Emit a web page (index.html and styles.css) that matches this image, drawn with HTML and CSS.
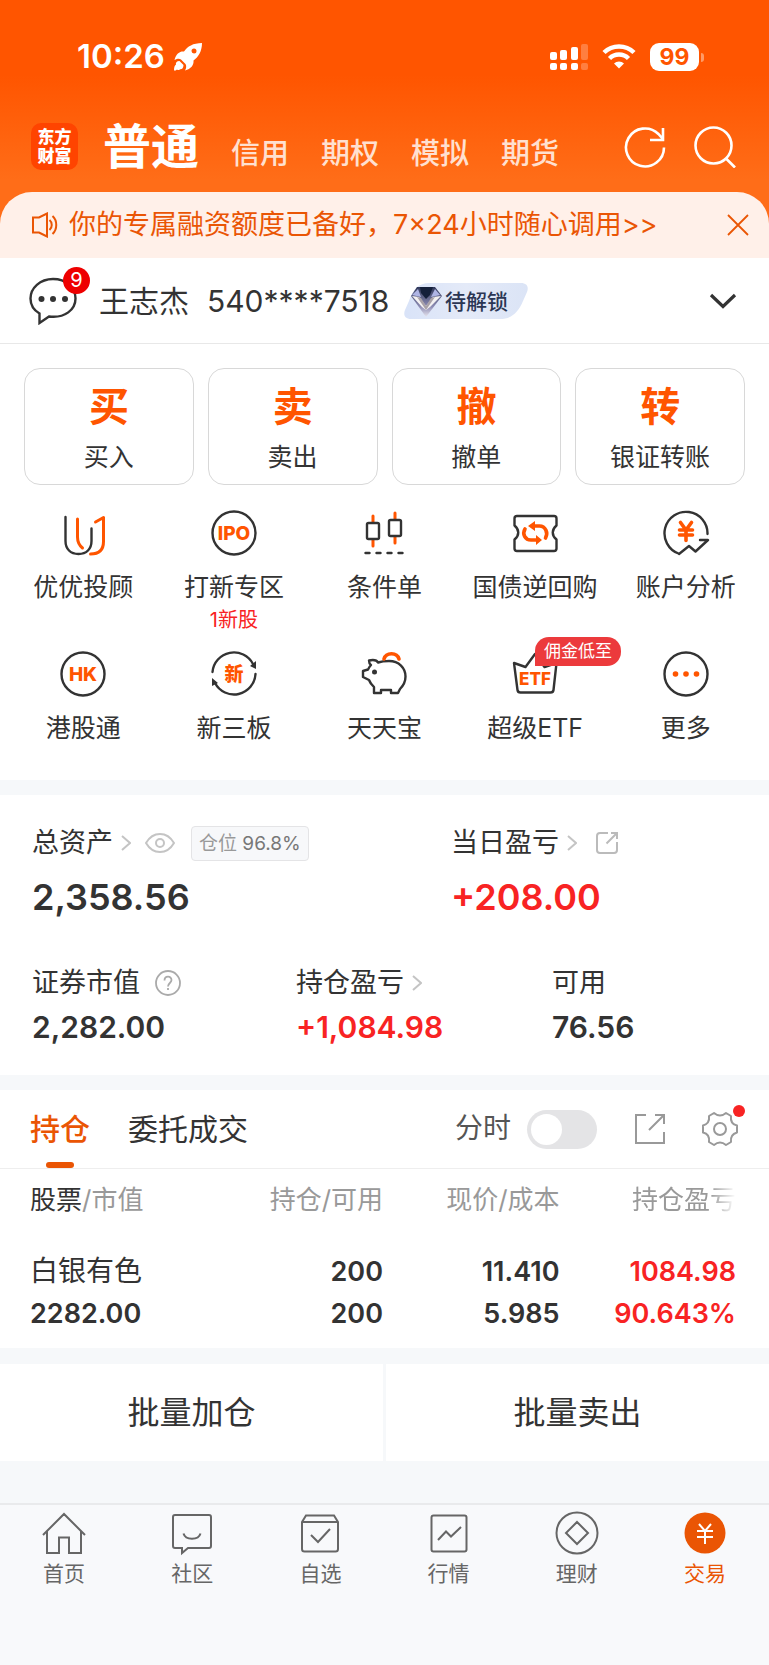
FILE: index.html
```html
<!DOCTYPE html>
<html lang="zh-CN">
<head>
  <meta charset="UTF-8">
  <meta name="viewport" content="width=device-width, initial-scale=1.0">
  <title>交易</title>
  <link rel="stylesheet" href="styles.css">
</head>
<body>
  <header class="top">
    <div class="status-bar">
      <span class="time">10:26</span>
      <svg class="rocket" width="30" height="30" viewBox="0 0 30 30" fill="#fff">
        <path fill-rule="evenodd" d="M29 1C20 1 14.500 4.500 11 9.500 7 9 3 11.500 1.500 18c3-1.500 5-1.500 6.500-.5l4.500 4.500c1 1.500 1 4-.5 6.500 6-1.500 9-5.500 8.500-10C25.500 15 29 9 29 1zM21 6.500a2.500 2.500 0 1 1 0 5 2.500 2.500 0 0 1 0-5z"/>
        <path d="M6.500 19c-3 0-4 2-3.500 3.500-1.500 1-2 3-2 6 1.500 0 2 0 3-1 1 .8 2 .8 3-.3 2 .3 3.500-1.200 3.500-4.200z"/>
      </svg>
      <div class="status-icons">
        <svg width="38" height="28" viewBox="0 0 38 28" fill="#fff">
          <rect x="0" y="9" width="7" height="8" rx="2"/><rect x="10" y="7" width="7" height="10" rx="2"/><rect x="21" y="4" width="7" height="13" rx="2"/><rect x="31" y="1" width="7" height="16" rx="2" opacity=".25"/>
          <rect x="0" y="20" width="7" height="7" rx="2"/><rect x="10" y="20" width="7" height="7" rx="2"/><rect x="21" y="20" width="7" height="7" rx="2"/><rect x="31" y="20" width="7" height="7" rx="2" opacity=".25"/>
        </svg>
        <svg width="34" height="26" viewBox="0 0 34 26" fill="none" stroke="#fff" stroke-width="4.500">
          <path d="M2 8.500a21.500 21.500 0 0 1 30 0M7.500 14.500a13.500 13.500 0 0 1 19 0"/>
          <path d="M12 19.500a7 7 0 0 1 10 0l-5 5z" fill="#fff" stroke="none"/>
        </svg>
        <div class="battery"><span class="battery-level">99</span><i class="battery-tip"></i></div>
      </div>
    </div>

    <div class="nav-bar">
      <div class="logo"><span>东方</span><span>财富</span></div>
      <nav class="account-tabs">
        <a href="#" class="active">普通</a>
        <a href="#">信用</a>
        <a href="#">期权</a>
        <a href="#">模拟</a>
        <a href="#">期货</a>
      </nav>
      <button class="icon-btn" aria-label="刷新">
        <svg width="42" height="42" viewBox="0 0 42 42" fill="none" stroke="#fff" stroke-width="2.600">
          <path d="M40 21.500a19 19 0 1 1-5.600-13.500l4 4.500M39 2v12H26"/>
        </svg>
      </button>
      <button class="icon-btn" aria-label="搜索">
        <svg width="42" height="42" viewBox="0 0 42 42" fill="none" stroke="#fff" stroke-width="2.600">
          <circle cx="19.500" cy="19.500" r="18"/><path d="M31.500 32L41 41.500"/>
        </svg>
      </button>
    </div>

    <div class="notice">
      <svg width="26" height="26" viewBox="0 0 26 26" fill="none" stroke="#ea5504" stroke-width="2">
        <path d="M1 5.500h6l8-4v23l-8-4H1zM17.500 8c3 2.500 3 7.500 0 10M20.500 4c5 4.500 5 13.500 0 18"/>
      </svg>
      <a href="#">你的专属融资额度已备好，7×24小时随心调用&gt;&gt;</a>
      <button class="icon-btn" aria-label="关闭">
        <svg width="22" height="22" viewBox="0 0 22 22" fill="none" stroke="#ea5504" stroke-width="1.800"><path d="M1 1l20 20M21 1L1 21"/></svg>
      </button>
    </div>
  </header>

  <main>
    <section class="user-row">
      <button class="icon-btn message" aria-label="消息">
        <svg width="48" height="48" viewBox="0 0 48 48" fill="none" stroke="#333" stroke-width="2.400">
          <path d="M24 2C11 2 1.500 11 1.500 21.500c0 6 3 11.500 9 15V46l9.500-6.500c16 2 26.500-7 26.500-18C46.500 10.500 37 2 24 2z"/>
          <g fill="#333" stroke="none"><circle cx="12.500" cy="22" r="3"/><circle cx="24" cy="22" r="3"/><circle cx="36" cy="22" r="3"/></g>
        </svg>
        <span class="count">9</span>
      </button>
      <span class="user-name">王志杰</span>
      <span class="user-account">540****7518</span>
      <svg class="level" width="126" height="36" viewBox="0 0 126 36">
        <defs>
          <linearGradient id="levelBg" x1="0" x2="1"><stop offset="0" stop-color="#d9e3f8"/><stop offset=".5" stop-color="#e4eaf8"/><stop offset="1" stop-color="#dbe4f6"/></linearGradient>
          <linearGradient id="gem" x1="0" x2="0" y1="0" y2="1"><stop offset="0" stop-color="#30385a"/><stop offset=".65" stop-color="#8d8cb4"/><stop offset="1" stop-color="#e8e6ee"/></linearGradient>
        </defs>
        <path fill="url(#levelBg)" d="M26 0h92c6 0 8 4 6 9l-4 9c-5 12-12 18-23 18H8c-6 0-8-4-6-9l4-9C10 6 16 0 26 0z"/>
        <path fill="url(#gem)" d="M14 4h18l7 9-16 21L8 13z"/>
        <path fill="#141f3a" d="M17 4h13l-3 8-4 4-5-6z"/>
        <path fill="#aeb4e4" d="M9 12l6-6 3 8zM37 12l-5-6-4 8z"/>
        <path fill="#f3f1f2" d="M9 13l7 1 7 9 7-9 8-1-11 11-4 3-4-3z"/>
        <path fill="#a9a2a8" d="M14 14l4 1 5 8 5-8 4-1-9 13z"/>
        <text x="42" y="26" class="level-text">待解锁</text>
      </svg>
      <button class="icon-btn expand" aria-label="展开">
        <svg width="28" height="18" viewBox="0 0 28 18" fill="none" stroke="#333" stroke-width="3.200"><path d="M2 3l12 11.500L26 3"/></svg>
      </button>
    </section>

    <section class="panel">
      <div class="trade-cards">
        <button class="trade-card"><b>买</b><span>买入</span></button>
        <button class="trade-card"><b>卖</b><span>卖出</span></button>
        <button class="trade-card"><b>撤</b><span>撤单</span></button>
        <button class="trade-card"><b>转</b><span>银证转账</span></button>
      </div>

      <div class="shortcuts">
        <a href="#" class="shortcut">
          <span class="shortcut-icon"><svg class="line-icon" viewBox="0 0 48 48">
            <path d="M6.500 8v24c0 8 5 13 13 13s13-5 13-13V19.500"/>
            <path class="accent" d="M18.500 10v18c0 6 2 8.500 5 11M36.500 13l8-4.500v24c0 8-4 12.500-13 12.500"/>
          </svg></span>
          <span>优优投顾</span>
        </a>
        <a href="#" class="shortcut">
          <span class="shortcut-icon"><svg class="line-icon" viewBox="0 0 48 48">
            <circle cx="24" cy="24" r="21.500"/><text x="24" y="31">IPO</text>
          </svg></span>
          <span>打新专区</span>
          <small>1新股</small>
        </a>
        <a href="#" class="shortcut">
          <span class="shortcut-icon"><svg class="line-icon" viewBox="0 0 48 48">
            <path class="accent" d="M13 7v6M13 31v6M35 4v6M35 28v6"/>
            <rect x="7" y="14" width="12" height="16" rx="1.500"/><rect x="29" y="11" width="12" height="16" rx="1.500"/>
            <path d="M5.500 44h4M16.500 44h4M27.500 44h4M38.500 44h4"/>
          </svg></span>
          <span>条件单</span>
        </a>
        <a href="#" class="shortcut">
          <span class="shortcut-icon"><svg class="line-icon" viewBox="0 0 48 48">
            <path d="M6 7h37q2.500 0 2.500 2.500v7c-5 4-5 10 0 14v9q0 2.500-2.500 2.500H6q-2.500 0-2.500-2.500v-9c5-4 5-10 0-14v-7Q3.500 7 6 7z"/>
            <path class="accent thick" d="M14 20c-3 5 0 11 6 11h6M34.500 29c3-5 0-12-6-12h-6"/>
            <path class="accent-fill" d="M25 26l6 5-6 5zM24 12l-7 5 7 5z"/>
          </svg></span>
          <span>国债逆回购</span>
        </a>
        <a href="#" class="shortcut">
          <span class="shortcut-icon"><svg class="line-icon" viewBox="0 0 48 48">
            <path d="M45.500 25A21.500 21.500 0 1 0 16.500 44.500l.5.500 10-8 6.500 5.500L46 31h-8"/>
            <path class="accent thick" d="M18.500 13.500l5.500 7.500 5.500-7.500M24 21v10.500M17.500 21h13M17.500 26h13"/>
          </svg></span>
          <span>账户分析</span>
        </a>
        <a href="#" class="shortcut">
          <span class="shortcut-icon"><svg class="line-icon" viewBox="0 0 48 48">
            <circle cx="24" cy="24" r="21.500"/><text x="24" y="31">HK</text>
          </svg></span>
          <span>港股通</span>
        </a>
        <a href="#" class="shortcut">
          <span class="shortcut-icon"><svg class="line-icon" viewBox="0 0 48 48">
            <path d="M2.500 22A21.500 21.500 0 0 1 43 14M45.500 24A21.500 21.500 0 0 1 5 33"/>
            <path class="dark-fill" d="M46 11v8l-6-3zM2 36v-8l6 5z"/>
            <text x="24" y="31">新</text>
          </svg></span>
          <span>新三板</span>
        </a>
        <a href="#" class="shortcut">
          <span class="shortcut-icon"><svg class="line-icon" viewBox="0 0 48 48">
            <path d="M9 10.500c5-1 8 0 9 2 3-1 7-1.500 11-1.500 10 0 16.500 7 16.500 15.500 0 6-3 10-5.500 12.500l-2 4h-7v-3H21v3h-7v-6c-2-2-4-4-5-7l-6-3v-6l5-1.500c1-2 2-3.500 3-4.500-1.500-1-2-2.500-2-4.500z"/>
            <path class="accent thick" d="M24 9c2-7 13-7 15 0"/>
            <circle class="dark-fill" cx="14.500" cy="22" r="2.500"/>
          </svg></span>
          <span>天天宝</span>
        </a>
        <a href="#" class="shortcut">
          <span class="shortcut-icon"><svg class="line-icon" viewBox="0 0 48 48">
            <path d="M3 13l11.500 4L24 4l9.500 13L45.500 13l-3 27q-.3 2.500-3 2.500h-30q-2.700 0-3-2.500z"/>
            <text class="small" x="24" y="35">ETF</text>
          </svg><em class="promo">佣金低至</em></span>
          <span>超级ETF</span>
        </a>
        <a href="#" class="shortcut">
          <span class="shortcut-icon"><svg class="line-icon" viewBox="0 0 48 48">
            <circle cx="24" cy="24" r="21.500"/>
            <g class="accent-fill"><circle cx="13.500" cy="24" r="2.800"/><circle cx="24" cy="24" r="2.800"/><circle cx="34.500" cy="24" r="2.800"/></g>
          </svg></span>
          <span>更多</span>
        </a>
      </div>
    </section>

    <section class="assets">
      <div class="assets-main">
        <div>
          <div class="asset-label">
            <a href="#">总资产</a>
            <svg class="arrow" width="10" height="16" viewBox="0 0 10 16"><path d="M1 1l8 7-8 7"/></svg>
            <button class="icon-btn eye" aria-label="隐藏金额">
              <svg width="30" height="20" viewBox="0 0 30 20" fill="none" stroke="#c4c4c4" stroke-width="2"><path d="M1 10c7-12 21-12 28 0-7 12-21 12-28 0z"/><circle cx="15" cy="10" r="4"/></svg>
            </button>
            <span class="position">仓位 <b>96.8%</b></span>
          </div>
          <div class="asset-value">2,358.56</div>
        </div>
        <div>
          <div class="asset-label">
            <a href="#">当日盈亏</a>
            <svg class="arrow" width="10" height="16" viewBox="0 0 10 16"><path d="M1 1l8 7-8 7"/></svg>
            <button class="icon-btn share" aria-label="分享">
              <svg width="24" height="24" viewBox="0 0 24 24" fill="none" stroke="#bbb" stroke-width="2"><path d="M13 2H5Q2 2 2 5v14q0 3 3 3h14q3 0 3-3v-8M11.500 12.500L22 2M16 2h6v6"/></svg>
            </button>
          </div>
          <div class="asset-value red">+208.00</div>
        </div>
      </div>
      <div class="assets-sub">
        <div>
          <div class="asset-label">
            <span>证券市值</span>
            <button class="icon-btn help" aria-label="说明">
              <svg width="26" height="26" viewBox="0 0 26 26" fill="none" stroke="#aaa" stroke-width="1.800"><circle cx="13" cy="13" r="12"/><path d="M9.500 10.500c0-5 7-5 7-.5 0 3-3.500 3-3.500 6.500M13 18v2"/></svg>
            </button>
          </div>
          <div class="asset-value">2,282.00</div>
        </div>
        <div>
          <div class="asset-label">
            <a href="#">持仓盈亏</a>
            <svg class="arrow" width="10" height="16" viewBox="0 0 10 16"><path d="M1 1l8 7-8 7"/></svg>
          </div>
          <div class="asset-value red">+1,084.98</div>
        </div>
        <div>
          <div class="asset-label"><span>可用</span></div>
          <div class="asset-value">76.56</div>
        </div>
      </div>
    </section>

    <section class="holdings">
      <div class="holding-bar">
        <button class="tab active">持仓</button>
        <button class="tab">委托成交</button>
        <label class="chart-switch">分时 <input type="checkbox" role="switch"></label>
        <button class="icon-btn" aria-label="导出">
          <svg width="32" height="32" viewBox="0 0 32 32" fill="none" stroke="#999" stroke-width="2"><path d="M12 2H2v28h28V19M15 17L30 2M21 2h9v9"/></svg>
        </button>
        <button class="icon-btn settings" aria-label="设置">
          <svg width="36" height="36" viewBox="0 0 36 36" fill="none" stroke="#999" stroke-width="2" stroke-linejoin="round">
            <path d="M12 2q6 5 12 0l5 3q-1 8 6 9.500v7q-7 2-6 9.500l-5 3q-6-5-12 0l-5-3q1-8-6-9.500v-7q7-2 6-9.500z"/><circle cx="18" cy="18" r="6"/>
          </svg>
          <span class="dot"></span>
        </button>
      </div>
      <table class="stock-table">
        <thead>
          <tr><th><b>股票</b>/市值</th><th>持仓/可用</th><th>现价/成本</th><th><span class="fade">持仓盈亏</span></th></tr>
        </thead>
        <tbody>
          <tr><td><span class="stock-name">白银有色</span><br>2282.00</td><td>200<br>200</td><td>11.410<br>5.985</td><td class="red">1084.98<br>90.643%</td></tr>
        </tbody>
      </table>
    </section>

    <div class="batch">
      <button>批量加仓</button>
      <button>批量卖出</button>
    </div>
  </main>

  <nav class="tab-bar">
    <a href="#">
      <svg viewBox="0 0 48 48"><path d="M3 26L24 5l21 21M7 22v22h12V28.500h10V44h12V22"/></svg>
      <span>首页</span>
    </a>
    <a href="#">
      <svg viewBox="0 0 48 48"><path d="M7 6h34q2 0 2 2v29q0 2-2 2H20l-6 5v-5H7q-2 0-2-2V8q0-2 2-2z"/><path d="M15.500 24.500c2 7 15 7 17 0"/></svg>
      <span>社区</span>
    </a>
    <a href="#">
      <svg viewBox="0 0 48 48"><path d="M6 13v27q0 2.500 2.500 2.500h31q2.500 0 2.500-2.500V13l-4-6.500H10zM6 13h36M15 26l7 7 12-13"/></svg>
      <span>自选</span>
    </a>
    <a href="#">
      <svg viewBox="0 0 48 48"><rect x="6.500" y="6.500" width="35" height="36" rx="2"/><path d="M13 31l8-8.500 5 5L36 18"/></svg>
      <span>行情</span>
    </a>
    <a href="#">
      <svg viewBox="0 0 48 48"><circle cx="24" cy="24" r="20.500"/><path d="M24 13l11 11-11 11-11-11z"/></svg>
      <span>理财</span>
    </a>
    <a href="#" class="active">
      <svg viewBox="0 0 48 48"><circle class="coin" cx="24" cy="24" r="20.500"/><path class="yen" d="M18 15l6 7 6-7M24 22v13M16 22h16M16 28h16"/></svg>
      <span>交易</span>
    </a>
  </nav>
</body>
</html>
```
FILE: styles.css
```css
* {
  margin: 0;
  padding: 0;
  box-sizing: border-box;
}
body {
  min-height: 100vh;
  display: flex;
  flex-direction: column;
  font-family: Inter, "Noto Sans CJK SC", sans-serif;
  line-height: 1.2;
  background-color: #f6f8fa;
  color: #333;
}
a {
  color: inherit;
  text-decoration: none;
}
button {
  font: inherit;
  color: inherit;
  background: none;
  border: none;
  cursor: pointer;
}
svg {
  display: block;
  flex: none;
}
.icon-btn {
  display: flex;
  flex: none;
}
.red {
  color: #f82323;
}

/* header */
.top {
  background: linear-gradient(#ff5500 75px, #ff6d18 180px);
}
.status-bar {
  display: flex;
  align-items: center;
  height: 114px;
  padding: 0 65px 0 77px;
  color: #fff;
}
.time {
  font-size: 33px;
  font-weight: 600;
}
.rocket {
  margin-left: 8px;
}
.status-icons {
  display: flex;
  align-items: center;
  gap: 14px;
  margin-left: auto;
}
.battery {
  display: flex;
  align-items: center;
  gap: 2px;
}
.battery-level {
  width: 49px;
  border-radius: 9px;
  background-color: #fff;
  color: #ff5500;
  font-size: 23px;
  font-weight: 700;
  line-height: 28px;
  text-align: center;
}
.battery-tip {
  width: 3px;
  height: 9px;
  border-radius: 0 3px 3px 0;
  background-color: #ff9a66;
}
.nav-bar {
  display: flex;
  align-items: center;
  gap: 28px;
  height: 78px;
  padding: 0 33px 13px 31px;
}
.logo {
  display: flex;
  flex-direction: column;
  align-items: center;
  justify-content: center;
  width: 47px;
  height: 47px;
  border-radius: 10px;
  background-color: #ff4400;
  color: #fff;
  font-size: 17px;
  font-weight: 900;
  line-height: 19px;
}
.account-tabs {
  flex: 1;
  display: flex;
  align-items: baseline;
  gap: 32px;
  margin-left: -3px;
  padding-top: 8px;
  color: #ffe0d0;
  font-size: 29px;
  font-weight: 500;
  line-height: 60px;
}
.account-tabs .active {
  color: #fff;
  font-size: 48px;
  font-weight: 700;
}
.notice {
  display: flex;
  align-items: center;
  gap: 11px;
  height: 66px;
  padding: 0 20px 0 32px;
  border-radius: 32px 32px 0 0;
  background-color: #fff0e9;
  color: #ea5504;
  font-size: 27px;
}
.notice a {
  flex: 1;
}

/* account */
.user-row {
  display: flex;
  align-items: center;
  height: 86px;
  padding: 0 32px 0 29px;
  border-bottom: 1px solid #e8e8e8;
  background-color: #fff;
}
.message {
  position: relative;
}
.count {
  position: absolute;
  top: -10px;
  left: 34px;
  width: 27px;
  border-radius: 50%;
  background-color: #ee0000;
  color: #fff;
  font-size: 20px;
  line-height: 27px;
  text-align: center;
}
.user-name {
  margin: 0 18px 0 22px;
  font-size: 30px;
}
.user-account {
  font-size: 30px;
}
.level {
  margin-left: 14px;
}
.level-text {
  fill: #2b3654;
  font-size: 21px;
  font-weight: 500;
}
.expand {
  margin-left: auto;
}

.panel {
  padding: 24px 0 34px;
  background-color: #fff;
}
.trade-cards {
  display: grid;
  grid-template-columns: repeat(4, 1fr);
  gap: 14px;
  padding: 0 24px;
}
.trade-card {
  display: flex;
  flex-direction: column;
  align-items: center;
  gap: 10px;
  padding: 14px 0 11px;
  border: 1px solid #d8d8d8;
  border-radius: 16px;
}
.trade-card b {
  color: #ff5500;
  font-size: 40px;
  font-weight: 700;
  line-height: 48px;
}
.trade-card span {
  font-size: 25px;
  line-height: 32px;
}
.shortcuts {
  display: grid;
  grid-template-columns: repeat(5, 1fr);
  row-gap: 15px;
  padding: 24px 8px 0;
}
.shortcut {
  display: flex;
  flex-direction: column;
  align-items: center;
  font-size: 25px;
  line-height: 36px;
  white-space: nowrap;
}
.shortcut small {
  color: #f82323;
  font-size: 20px;
  line-height: 30px;
}
.shortcut-icon {
  position: relative;
  margin-bottom: 12px;
}
.line-icon {
  width: 48px;
  height: 48px;
  fill: none;
  stroke: #333;
  stroke-width: 2.4;
  stroke-linecap: round;
  stroke-linejoin: round;
}
.line-icon text {
  fill: #ff5500;
  stroke: none;
  font-size: 19px;
  font-weight: 800;
  text-anchor: middle;
}
.line-icon .small {
  font-size: 17px;
}
.line-icon .accent {
  stroke: #ff5500;
  stroke-width: 3;
}
.line-icon .thick {
  stroke-width: 3.6;
}
.accent-fill {
  fill: #ff5500;
  stroke: none;
}
.dark-fill {
  fill: #333;
  stroke: none;
}
.promo {
  position: absolute;
  top: -13px;
  left: 24px;
  padding: 0 9px;
  border-radius: 14px 14px 14px 0;
  background-color: #ec3a3c;
  color: #fff;
  font-size: 17px;
  font-style: normal;
  line-height: 29px;
}

/* assets */
.assets {
  margin-top: 15px;
  padding: 30px 32px 28px;
  background-color: #fff;
}
.assets-main {
  display: grid;
  grid-template-columns: 419fr 286fr;
  margin-bottom: 44px;
}
.assets-sub {
  display: grid;
  grid-template-columns: 264fr 256fr 185fr;
}
.asset-label {
  display: flex;
  align-items: center;
  height: 36px;
  font-size: 27px;
}
.arrow {
  margin-left: 8px;
  fill: none;
  stroke: #c4c4c4;
  stroke-width: 2;
}
.eye {
  margin-left: 14px;
}
.share {
  margin-left: 18px;
}
.help {
  margin-left: 15px;
}
.position {
  margin-left: 16px;
  padding: 0 7px;
  border: 1px solid #e4e4e6;
  border-radius: 4px;
  background-color: #f7f8fa;
  color: #999;
  font-size: 19px;
  line-height: 33px;
}
.position b {
  color: #777;
  font-weight: 400;
}
.asset-value {
  margin-top: 6px;
  font-size: 30px;
  font-weight: 600;
  line-height: 40px;
}
.assets-main .asset-value {
  margin-top: 12px;
  font-size: 36px;
  line-height: 48px;
}

/* holdings */
.holdings {
  margin-top: 15px;
  background-color: #fff;
}
.holding-bar {
  display: flex;
  align-items: center;
  height: 79px;
  padding: 0 31px 0 30px;
  border-bottom: 1px solid #eee;
}
.tab {
  display: flex;
  flex-direction: column;
  align-items: center;
  align-self: stretch;
  margin-right: 38px;
  font-size: 30px;
  line-height: 78px;
}
.tab.active {
  color: #ea5504;
  font-weight: 500;
}
.tab.active::after {
  content: "";
  width: 28px;
  height: 6px;
  margin-top: -6px;
  border-radius: 3px;
  background-color: #ea5504;
}
.chart-switch {
  display: flex;
  align-items: center;
  gap: 16px;
  margin: 0 37px 0 auto;
  color: #555;
  font-size: 28px;
}
.chart-switch input {
  appearance: none;
  width: 70px;
  height: 39px;
  padding: 4px;
  border-radius: 20px;
  background-color: #e4e4e6;
}
.chart-switch input::before {
  content: "";
  display: block;
  width: 31px;
  height: 31px;
  border-radius: 50%;
  background-color: #fff;
}
.chart-switch input:checked::before {
  margin-left: auto;
}
.settings {
  position: relative;
  margin-left: 36px;
}
.dot {
  position: absolute;
  top: -6px;
  right: -7px;
  width: 12px;
  height: 12px;
  border-radius: 50%;
  background-color: #f82323;
}
.stock-table {
  width: 100%;
  padding: 0 33px 13px 30px;
  border-spacing: 0;
  table-layout: fixed;
}
.stock-table th {
  padding-bottom: 19px;
  color: #999;
  font-size: 26px;
  font-weight: 400;
  line-height: 62px;
  text-align: right;
  white-space: nowrap;
}
.stock-table th b {
  color: #333;
  font-weight: 400;
}
.stock-table td {
  font-size: 27px;
  font-weight: 600;
  line-height: 42px;
  text-align: right;
}
.stock-table th:first-child,
.stock-table td:first-child {
  text-align: left;
}
.stock-name {
  font-size: 28px;
  font-weight: 400;
}
.fade {
  -webkit-mask-image: linear-gradient(to right, #000 75%, transparent);
  mask-image: linear-gradient(to right, #000 75%, transparent);
}
.batch {
  display: grid;
  grid-template-columns: 1fr 1fr;
  gap: 3px;
  margin-top: 16px;
}
.batch button {
  background-color: #fff;
  font-size: 32px;
  line-height: 97px;
}

/* bottom tabs */
.tab-bar {
  flex: 1;
  display: grid;
  grid-template-columns: repeat(6, 1fr);
  margin-top: 42px;
  padding: 4px 0 34px;
  border-top: 2px solid #e9eaec;
  background-color: #f8f9fb;
  color: #666;
  font-size: 21px;
  line-height: 28px;
}
.tab-bar a {
  display: flex;
  flex-direction: column;
  align-items: center;
  gap: 3px;
}
.tab-bar svg {
  width: 48px;
  height: 48px;
  fill: none;
  stroke: #666;
  stroke-width: 2;
}
.tab-bar .active {
  color: #ea5504;
}
.tab-bar .coin {
  fill: #ea5504;
  stroke: none;
}
.tab-bar .yen {
  stroke: #fff;
}
```
